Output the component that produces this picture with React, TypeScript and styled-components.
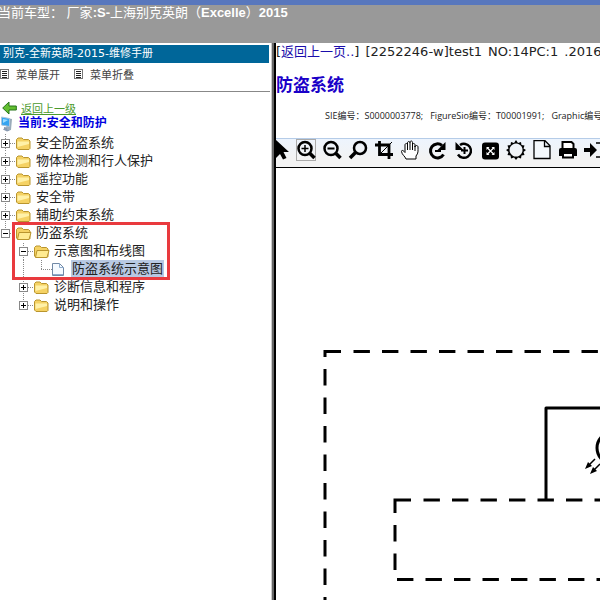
import React from "react";
import styled, { createGlobalStyle } from "styled-components";

const GlobalStyle = createGlobalStyle`
  * { box-sizing: border-box; }
  body {
    margin: 0;
    background: #fff;
    color: #222;
    font-family: "DejaVu Sans", "Noto Sans CJK SC", sans-serif;
    font-size: 13px;
  }
  a { color: inherit; text-decoration: none; }
  button { font: inherit; color: inherit; border: 0; padding: 0; background: none; cursor: pointer; }
  svg { display: block; flex: none; }
`;

const Page = styled.div`
  display: flex;
  flex-direction: column;
  height: 100vh;
  overflow: hidden;
`;

const Banner = styled.header`
  flex: none;
  height: 43px;
  border-top: 5px solid #5877bd;
  background: #999;
  color: #fff;
  font: 13px/16px "Liberation Sans", "Noto Sans CJK SC", sans-serif;
  text-indent: -2px;
  white-space: nowrap;
`;

const Frames = styled.div`
  flex: 1;
  min-height: 0;
  display: grid;
  grid-template-columns: 275px minmax(0, 1fr);
`;

const Sidebar = styled.aside`
  border-right: 3px solid #666;
  box-shadow: inset -1px 0 #ccc;
  padding-top: 2px;
  overflow: hidden;
`;

const ManualTitle = styled.h2`
  margin: 0 3px 0 0;
  padding-left: 3px;
  height: 18px;
  background: #006699;
  color: #fff;
  font-size: 11px;
  font-weight: 400;
  line-height: 18px;
  white-space: nowrap;
`;

const MenuBar = styled.div`
  display: flex;
  gap: 14px;
  height: 29px;
  padding-top: 2px;
  margin-right: 2px;
  border-bottom: 1px solid #888;
`;

const MenuButton = styled.button`
  display: flex;
  align-items: center;
  gap: 7px;
  height: 18px;
  font-size: 11px;
  color: #444;
`;

const Tree = styled.nav`
  padding-top: 8px;
`;

const BackLink = styled.a`
  display: flex;
  align-items: center;
  gap: 4px;
  height: 16px;
  padding-left: 2px;
  font-size: 11px;
  color: #4a9a2c;
  text-decoration: underline;
`;

const Current = styled.div`
  display: flex;
  align-items: center;
  gap: 3px;
  height: 18px;
  padding-bottom: 3px;
  font-size: 12px;
  line-height: 15px;
  font-weight: 700;
  color: #0000e0;
`;

const Row = styled.div`
  display: flex;
  align-items: center;
  height: 18px;
`;

const Spacer = styled.span`
  width: 18px;
`;

const Label = styled.a<{ $selected?: boolean }>`
  line-height: 16px;
  white-space: nowrap;
  background: ${(p) => (p.$selected ? "#b8c9e3" : "transparent")};
  box-shadow: ${(p) => (p.$selected ? "0 0 0 1px #b8c9e3" : "none")};
`;

const Marked = styled.div`
  position: relative;
`;

const MarkBox = styled.span`
  position: absolute;
  left: 12px;
  top: -2px;
  width: 158px;
  height: 58px;
  border: 3px solid #e93a3e;
  pointer-events: none;
`;

const Content = styled.main`
  display: flex;
  flex-direction: column;
  min-width: 0;
  border-left: 2px solid #000;
  margin-left: -1px;
  overflow: hidden;
`;

const Crumbs = styled.div`
  display: flex;
  gap: 6px;
  height: 18px;
  line-height: 17px;
  white-space: nowrap;
  a { color: #1a0dab; }
  span { flex: none; }
`;

const Title = styled.h1`
  margin: 12px 0 0;
  color: #1a00c8;
  font-size: 17px;
  line-height: 24px;
`;

const Meta = styled.div`
  display: flex;
  gap: 7px;
  margin-top: 11px;
  padding-left: 49px;
  height: 30px;
  font: 9px/16px "Open Sans", "Noto Sans CJK SC", sans-serif;
  white-space: nowrap;
  span { flex: none; }
`;

const Toolbar = styled.div`
  flex: none;
  display: flex;
  height: 30px;
  border-top: 1px solid #b5cce8;
  border-bottom: 1px solid #000;
  background: linear-gradient(#edf4fd, #f3f3f3 70%);
  overflow: hidden;
`;

const Tool = styled.button<{ $active?: boolean; $first?: boolean; $group?: boolean }>`
  flex: none;
  width: ${(p) => (p.$first ? 14 : 20)}px;
  height: 22px;
  margin-left: ${(p) => (p.$first ? 0 : p.$group ? 8 : 6)}px;
  border: 1px solid ${(p) => (p.$active ? "#aaa" : "transparent")};
  display: flex;
  align-items: center;
  justify-content: center;
`;

const Canvas = styled.div`
  flex: 1;
  min-height: 0;
  svg { width: 100%; height: 100%; }
`;

const ListIcon = () => (
  <svg width="9" height="10" viewBox="0 0 9 10" shapeRendering="crispEdges">
    <rect x="0.5" y="0.5" width="8" height="9" fill="#fff" stroke="#777" />
    <path d="M2 2.5h5M2 4.5h5M2 6.5h5M2 8.5h5" stroke="#222" />
  </svg>
);

const Toggle = ({ open, first, last }: { open?: boolean; first?: boolean; last?: boolean }) => (
  <button aria-label={open ? "折叠" : "展开"}>
    <svg width="15" height="18" viewBox="0 0 15 18" shapeRendering="crispEdges">
      <path d={`M5.5 ${first ? 0 : 1}V${last ? 9 : 18}`} stroke="#888" strokeDasharray="1 1" />
      <path d="M10 9.5H15" stroke="#888" strokeDasharray="1 1" />
      <rect x="1.5" y="5.5" width="8" height="8" fill="#fff" stroke="#888" />
      <path d={open ? "M3 9.5h5" : "M3 9.5h5M5.5 7v5"} stroke="#000" />
    </svg>
  </button>
);

const Folder = ({ open }: { open?: boolean }) => (
  <svg width="21" height="18" viewBox="0 0 21 18">
    <path d="M1.5 14V5.5L3 4h4l1.5 1.5h5L15 7v7.5l-1 1H3z" fill="#f5d264" stroke="#b9952e" />
    {open ? (
      <path d="M4 8.5h12l-2 7H2.5z" fill="#ffeb91" stroke="#b9952e" />
    ) : (
      <path d="M2.5 7.5H14v2.5L2.5 13z" fill="#fff1a8" />
    )}
  </svg>
);

type RowData = { text: string; level?: number; open?: boolean; first?: boolean; last?: boolean };

const Node = ({ text, level = 0, open, first, last }: RowData) => (
  <Row>
    {level > 0 && <Spacer />}
    <Toggle open={open} first={first} last={last} />
    <Folder open={open} />
    <Label href="#">{text}</Label>
  </Row>
);

const LeafLines = () => (
  <svg width="52" height="18" viewBox="0 0 52 18" shapeRendering="crispEdges">
    <path d="M23.5 0V18M41.5 0V9M41 9.5H52" stroke="#888" strokeDasharray="1 1" fill="none" />
  </svg>
);

const PageIcon = () => (
  <svg width="20" height="18" viewBox="0 0 20 18">
    <path d="M.5 3.500h7l4 4v8H.5z" fill="#f5faff" stroke="#7188a5" />
    <path d="M7.500 3.500v4h4M1 14.500h10" fill="none" stroke="#8faccd" />
  </svg>
);

const topNodes: RowData[] = [
  { text: "安全防盗系统", first: true },
  { text: "物体检测和行人保护" },
  { text: "遥控功能" },
  { text: "安全带" },
  { text: "辅助约束系统" },
];

const tools: { name: string; group?: boolean; active?: boolean; art: React.ReactNode }[] = [
  { name: "选择", art: <path d="M3 0V18l4-4 3 5.500 3.500-1.500-3-6h5.500z" fill="#000" /> },
  {
    name: "放大",
    active: true,
    art: <><circle cx="9" cy="8.500" r="6.500" strokeWidth="2.500" /><path d="M13.500 13l5 5" strokeWidth="3.500" /><path d="M5.500 8.500h7M9 5v7" strokeWidth="1.500" /></>,
  },
  {
    name: "缩小",
    art: <><circle cx="9" cy="8.500" r="6.500" strokeWidth="2.500" /><path d="M13.500 13l5 5" strokeWidth="3.500" /><path d="M5.500 8.500h7" strokeWidth="2" /></>,
  },
  { name: "放大镜", art: <><circle cx="12" cy="8" r="6" strokeWidth="2.500" /><path d="M7.500 12.500L2 18" strokeWidth="3.500" /></> },
  { name: "裁剪", art: <><path d="M5.500 1v13.500H19M1 5h14V19" strokeWidth="2.800" /><path d="M6 14L18 2" strokeWidth="1" /></> },
  {
    name: "平移",
    art: (
      <path
        d="M6 19c-1-3-4-4-4.500-7.500 0-2 2-1 3.500 1V5c0-2 2.500-2 2.500 0V3c0-2 2.500-2 2.500 0v-.5c0-2 2.500-2 2.500 0V5c0-2 2.500-2 2.500 0v2c0-2 3-2 3 0 0 4 .5 6-2 9v3zM7.500 5v5M10 3v7M12.500 4v6M15 6v5"
        fill="#fff" strokeWidth="1"
      />
    ),
  },
  { name: "向右旋转", group: true, art: <><path d="M15.500 14.500A7 7 0 1 1 14 5.500" strokeWidth="3" /><path d="M17.500 2v8h-8z" fill="#000" /><path d="M7 11h6" strokeWidth="2" /></> },
  { name: "向左旋转", art: <><path d="M4 14.500A7 7 0 1 0 6 5" strokeWidth="2.500" /><path d="M1.500 2v8h8z" fill="#000" /><path d="M7 10.500h7M10.500 7v7" strokeWidth="2" /></> },
  {
    name: "全屏",
    art: <><rect x="2" y="2.500" width="17" height="17" rx="3" fill="#000" /><path d="M6.500 10V7h3zM11.500 7h3v3zM6.500 12v3h3zM14.500 12v3h-3z" fill="#fff" /><path d="M7.500 8l6 6M13.500 8l-6 6" stroke="#fff" strokeWidth="1.200" /></>,
  },
  {
    name: "亮度",
    art: <path d="M10 0l2 3 3-1 .5 3 3 .5-1 3 2.500 1.500-2.500 2 1 3-3 .5-.5 3-3-1-2 2.500-2-2.500-3 1-.5-3-3-.5 1-3L0 10l2.500-1.500-1-3 3-.5L5 2l3 1zM10 3.500a6.500 6.500 0 1 0 .1 0" fill="#000" fillRule="evenodd" />,
  },
  { name: "新建", art: <path d="M2 .7h11l5 5V18.500H2zM12.500 1v5.500H18" fill="#f4f8fc" strokeWidth="1.300" /> },
  {
    name: "打印",
    art: <><path d="M4.500 9V2h9l2 2v5" fill="#fff" strokeWidth="2" /><path d="M1 10q0-2 2-2h14q2 0 2 2v6H1z" fill="#000" /><path d="M5 13h10v4.500H5z" fill="#fff" strokeWidth="2" /></>,
  },
  { name: "导出", art: <><path d="M0 8h6V3l7 7-7 7v-5H0z" fill="#000" /><path d="M12 3h6v14h-6" strokeWidth="1.500" /></> },
];

export default function App() {
  return (
    <Page>
      <GlobalStyle />
      <Banner>
        当前车型： 厂家<b>:S-</b>上海别克英朗（<b>Excelle</b>）<b>2015</b>
      </Banner>
      <Frames>
        <Sidebar>
          <ManualTitle>别克-全新英朗-2015-维修手册</ManualTitle>
          <MenuBar>
            <MenuButton><ListIcon />菜单展开</MenuButton>
            <MenuButton><ListIcon />菜单折叠</MenuButton>
          </MenuBar>
          <Tree>
            <BackLink href="#">
              <svg width="15" height="14" viewBox="0 0 15 14">
                <path d="M.7 7L7 1v4h7.300v4H7v4z" fill="#63bf30" stroke="#26741a" />
              </svg>
              返回上一级
            </BackLink>
            <Current>
              <svg width="15" height="16" viewBox="0 0 15 16">
                <path d="M7 2l5 1-1 11-5 1z" fill="#9aabba" />
                <path d="M1.500 1l8 1.500v8L1.500 9z" fill="#35a4f0" stroke="#a9c4dc" />
                <path d="M3 3l5 1-5 3z" fill="#9adcff" />
                <path d="M4 11l3 .5v2l3 1-3 1-4-2 1-1z" fill="#8899b0" />
              </svg>
              当前:安全和防护
            </Current>
            {topNodes.map((node) => <Node key={node.text} {...node} />)}
            <Marked>
              <Node text="防盗系统" open last />
              <Node text="示意图和布线图" level={1} open />
              <Row>
                <LeafLines />
                <PageIcon />
                <Label href="#" $selected>防盗系统示意图</Label>
              </Row>
              <MarkBox />
            </Marked>
            <Node text="诊断信息和程序" level={1} />
            <Node text="说明和操作" level={1} last />
          </Tree>
        </Sidebar>
        <Content>
          <Crumbs>
            <span>[<a href="#">返回上一页..</a>]</span>
            <span>[2252246-w]test1</span>
            <span>NO:14PC:1</span>
            <span>.2016</span>
          </Crumbs>
          <Title>防盗系统</Title>
          <Meta>
            <span>SIE编号：S0000003778;</span>
            <span>FigureSio编号：T00001991;</span>
            <span>Graphic编号</span>
          </Meta>
          <Toolbar>
            {tools.map((tool, i) => (
              <Tool key={tool.name} aria-label={tool.name} $first={i === 0} $group={tool.group} $active={tool.active}>
                <svg width="20" height="20" viewBox="0 0 20 20" fill="none" stroke="#000" strokeWidth="0">
                  {tool.art}
                </svg>
              </Tool>
            ))}
          </Toolbar>
          <Canvas>
            <svg fill="none" stroke="#000" strokeWidth="3">
              <path d="M49 189V183.500H65" />
              <path d="M77.500 183.500H2000M49 201V1600" strokeDasharray="16.400 12.100" />
              <path d="M119 345V332H135" />
              <path d="M147.500 332H2000M119 357V403M121 411.500H2000" strokeDasharray="16.400 12.100" />
              <path d="M270 332V240H2000" strokeLinejoin="round" />
              <circle cx="337" cy="280" r="16" />
              <path d="M319 291l-7 7M324 296l-7 7" strokeWidth="1.500" />
              <path d="M309 301l3-7 4 4zM314 306l3-7 4 4z" fill="#000" stroke="none" />
            </svg>
          </Canvas>
        </Content>
      </Frames>
    </Page>
  );
}
